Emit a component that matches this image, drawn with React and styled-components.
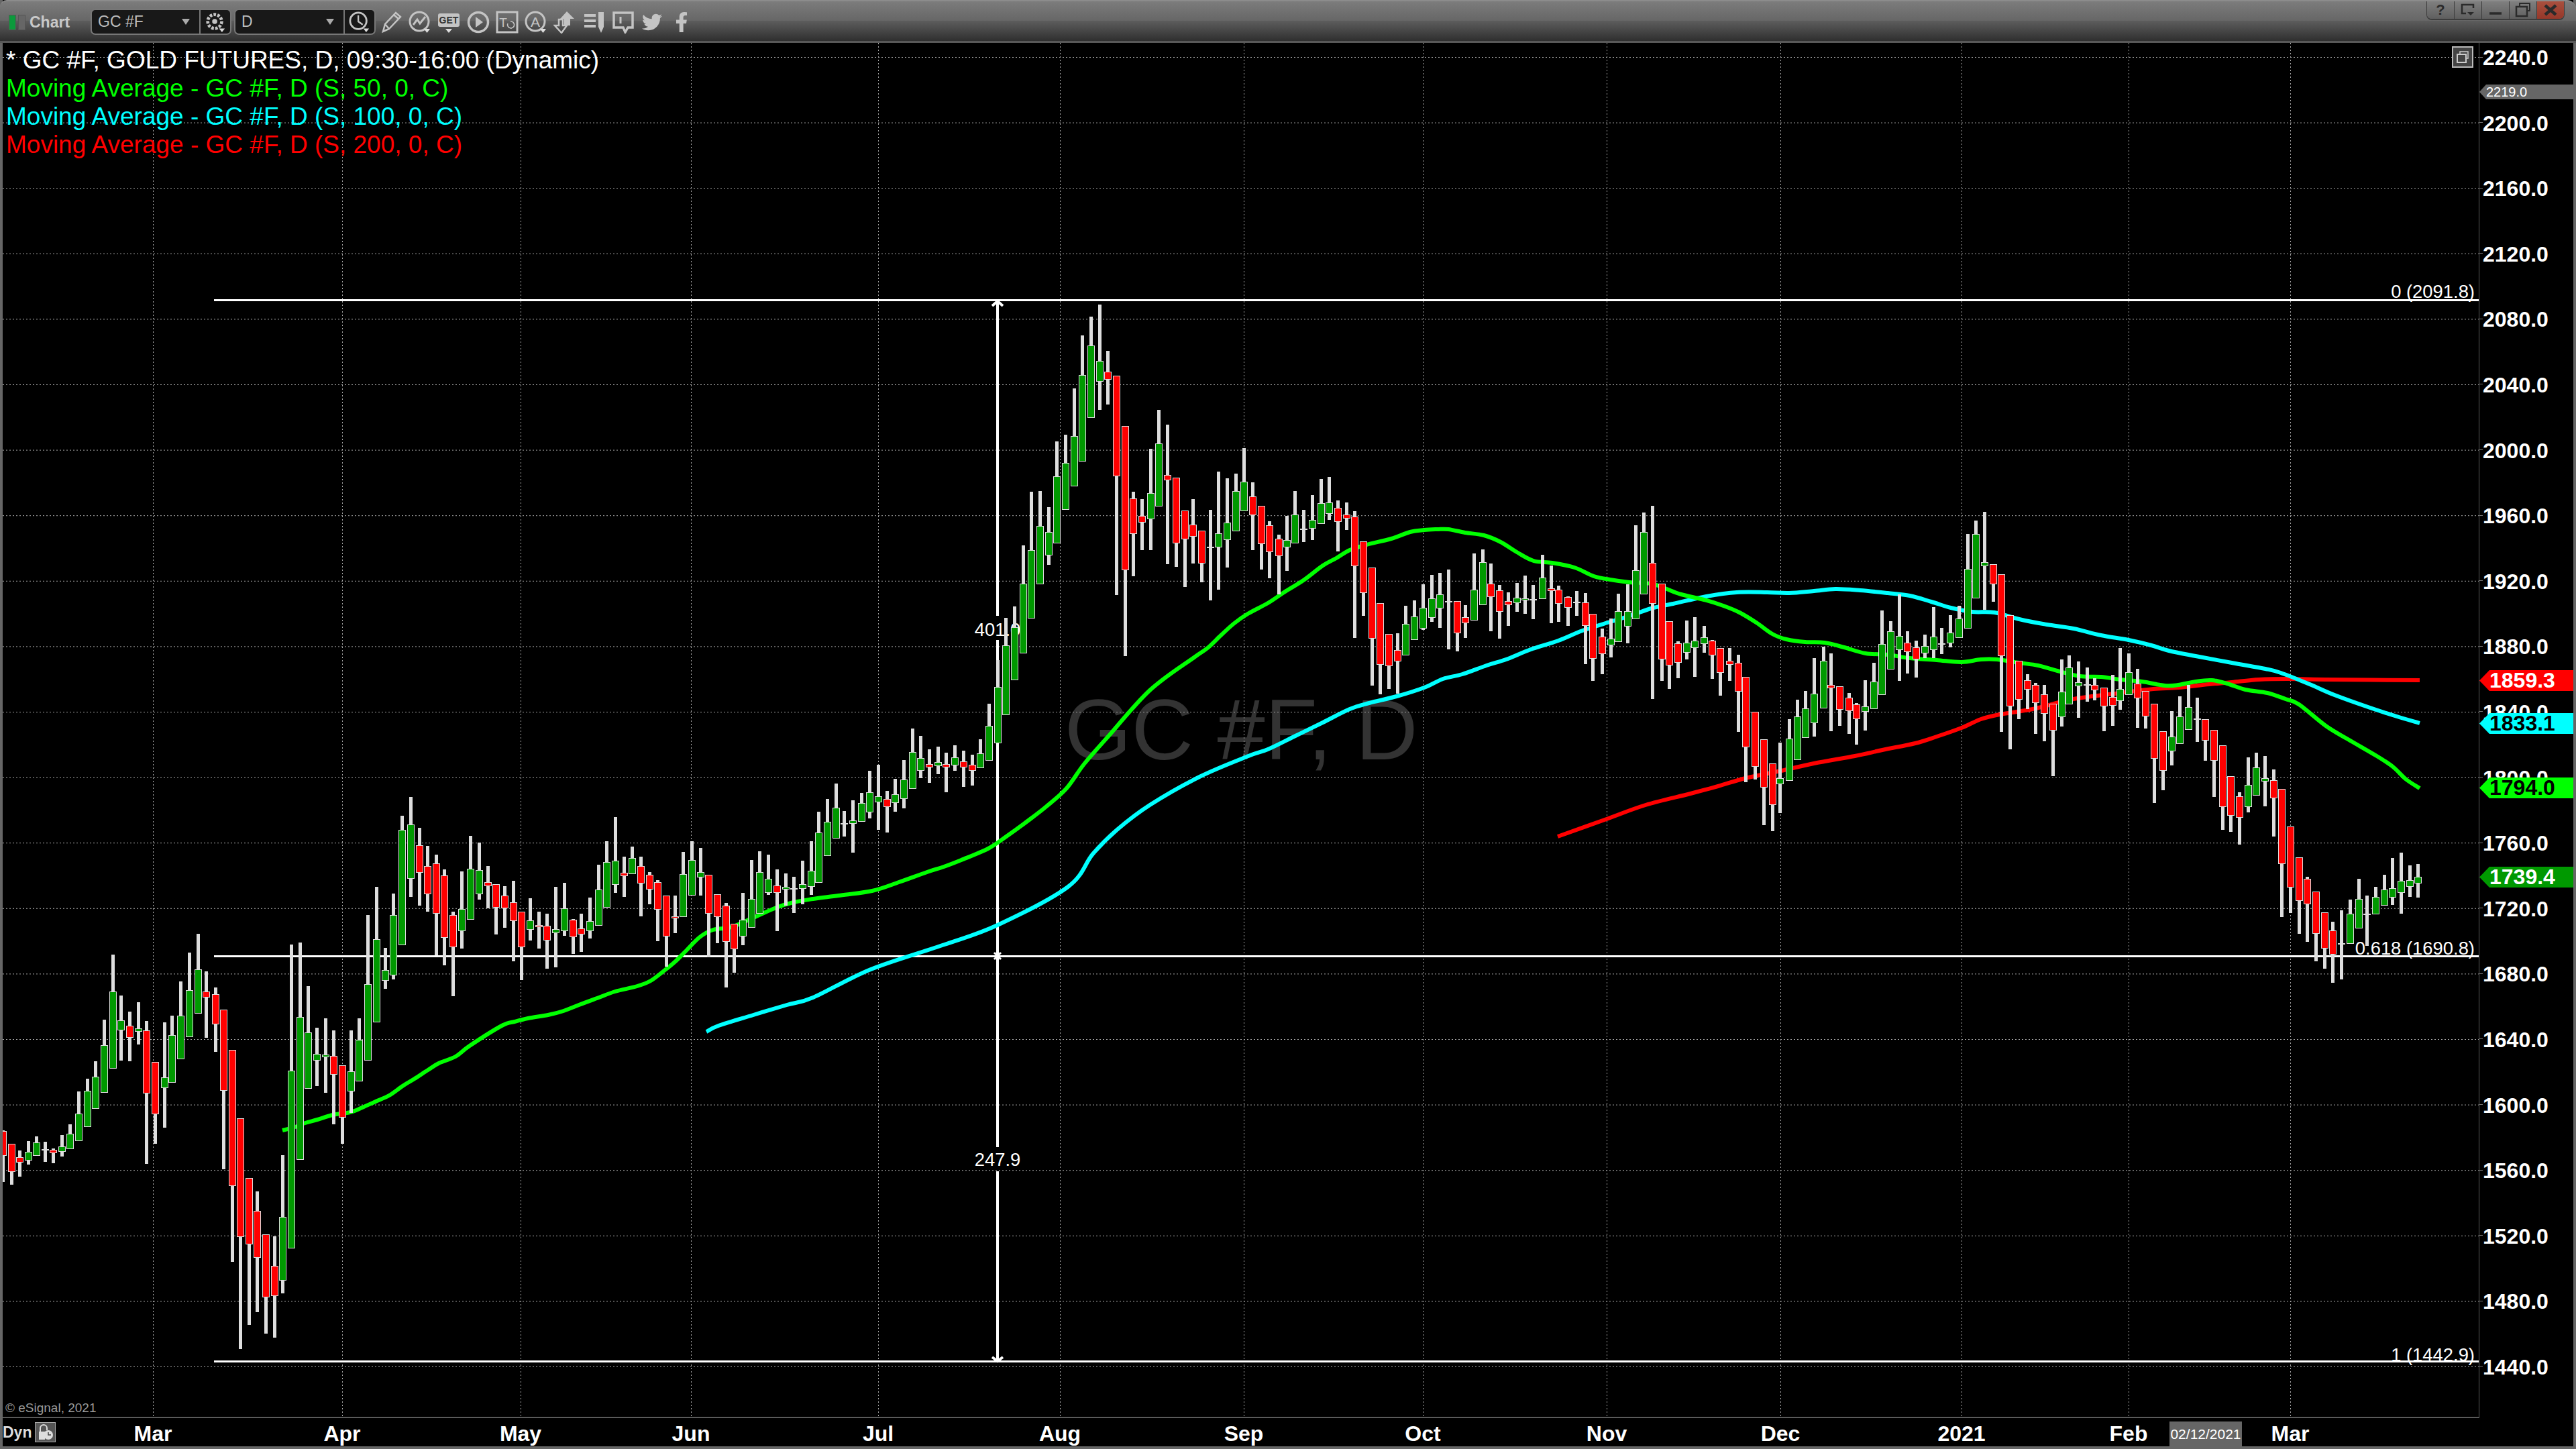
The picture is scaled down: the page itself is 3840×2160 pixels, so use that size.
import React from "react";
import styled, { createGlobalStyle } from "styled-components";
import { FaTwitter, FaFacebookF } from "react-icons/fa";

// candles traced from the chart: [x, wickTop, wickBottom, bodyTop, bodyBottom, colour]
// no body = doji (the open and close are the same)
const TRACES = [
  { ox: 0, oy: 1350, sx: 2.24, sy: 2.24, rows: [
    [10,750,922,754,834,"r"],[37,796,932,796,888,"r"],[64,818,905,842,857,"r"],[93,786,865,823,850,"g"],[122,771,834,792,834,"g"],
    [149,788,856,815],[178,810,860,816,825,"r"],[207,765,838,805,821,"g"],[234,730,812,763,812,"g"],[263,620,785,695,785,"g"],
    [292,578,738,619,738,"g"],[319,520,677,572,677,"g"],[348,381,624,467,624,"g"],[377,164,543,288,543,"g"],[404,300,517,384,415,"g"],
    [433,354,520,402,440,"r"],[462,323,464,412,420,"g"],[489,385,862,418,626,"r"],[518,523,795,523,695,"r"],[548,390,741,574,608,"g"],
    [574,367,590,433,590,"g"],[603,253,512,368,512,"g"],[632,157,438,283,438,"g"],[661,94,359,214,359,"g"],[688,220,441,288,306,"r"],
    [718,273,488,297,395,"r"],[747,348,880,348,617,"r"],[774,483,1189,483,935,"r"],[803,711,1481,711,1105,"r"],[832,910,1400,910,1130,"r"],
    [859,954,1357,1020,1175,"r"],[888,1099,1429,1099,1307,"r"],[917,1104,1443,1204,1302,"r"],[944,833,1295,1041,1251,"g"],[973,130,1143,552,1143,"g"],
    [1002,123,848,373,848,"g"],[1029,269,610,425,610,"g"],[1058,408,603,496,516,"g"],[1087,376,625,498,505,"g"],[1114,417,730,503,563,"r"],
    [1143,534,795,534,707,"r"],[1172,417,693,555,619,"g"],[1199,376,586,449,586,"g"],[1228,31,516,263,516,"g"],[1257,-63,389,113,389,"g"],
    [1286,141,278,216,250,"g"],[1313,-40,246,32,232,"g"],[1342,-300,131,-253,131,"g"],[1370,-363,-30,-270,-90,"g"],[1400,-260,0,-200,-110,"r"],
    [1428,-200,20,-130,-40,"r"],[1457,-170,165,-140,25,"r"],[1484,-120,199,-100,107,"r"],[1513,20,302,32,138,"r"],
  ]},
  { ox: 690, oy: 1130, sx: 3, sy: 3, rows: [
    [-5,507,852,675,772,"g"],[32,348,721,496,721,"g"],[71,378,633,502,607,"g"],[110,483,672,556,572,"r"],[146,565,789,565,668,"r"],
    [185,573,759,616,671,"r"],[224,549,909,646,728,"r"],[260,688,993,688,845,"r"],[299,627,816,727,767,"g"],[338,687,852,748,755,"r"],
    [374,696,942,752,815,"r"],[413,576,936,766,782,"g"],[452,558,795,673,773,"g"],[491,720,876,724,800,"r"],[527,696,867,763,788,"r"],
    [566,624,807,730,773,"g"],[605,477,748,589,748,"g"],[641,372,668,466,668,"g"],[680,264,603,460,565,"g"],[719,441,621,514,527,"r"],
    [755,396,518,448,518,"g"],[794,441,708,485,559,"r"],[833,510,654,523,587,"r"],[869,546,819,556,677,"r"],[908,616,933,616,797,"r"],
    [947,615,783,709,716,"r"],[983,420,710,520,710,"g"],[1022,372,614,457,614,"g"],[1061,402,615,511,533,"g"],[1097,523,891,523,695,"r"],
    [1136,610,828,610,710,"r"],[1175,648,1026,661,821,"r"],[1211,742,960,742,853,"r"],[1250,603,837,724,797,"g"],[1289,456,758,631,758,"g"],
    [1325,417,695,511,695,"g"],[1364,432,612,541,602,"g"],[1403,498,774,572,602,"r"],[1442,516,660,577,587,"g"],[1478,531,693,585],
    [1517,459,654,565,584,"g"],[1556,372,612,505,575,"g"],
  ]},
  { ox: 1200, oy: 880, sx: 3, sy: 3, rows: [
    [61,990,1305,1084,1305,"g"],[100,933,1187,1036,1187,"g"],[139,864,1108,973,1108,"g"],[175,987,1101,1044],[214,939,1173,1030,1043,"g"],
    [253,906,1034,952,1034,"g"],[289,807,1020,904,992,"g"],[328,780,1071,922,947,"g"],[367,897,1083,934,968,"r"],[403,843,990,913,950,"g"],
    [442,759,975,847,932,"g"],[481,618,887,724,887,"g"],[517,651,840,751,806,"g"],[556,711,861,778,791,"r"],[595,699,822,769,785,"g"],
    [631,726,903,778,791,"r"],[670,693,807,748,782,"g"],[709,717,879,766,791,"r"],[748,735,873,781,806,"r"],[784,666,794,730,794,"g"],
    [823,507,761,607,761,"g"],[862,312,683,433,683,"g"],[898,123,557,247,557,"g"],[937,72,401,166,401,"g"],
  ]},
  { ox: 1400, oy: 420, sx: 3, sy: 2.8, rows: [
    [376,1100,1550,1261,1550,"g"],[412,876,1405,1121,1405,"g"],[451,874,1262,1020,1262,"g"],[490,941,1182,1045,1141,"g"],[526,666,1091,813,1091,"g"],
    [565,638,951,757,951,"g"],[604,445,853,645,853,"g"],[640,224,749,390,749,"g"],[679,146,567,267,567,"g"],[718,95,535,331,416,"g"],
    [754,288,512,376,408,"r"],[793,393,1308,393,811,"r"],[832,603,1562,603,1203,"r"],[868,876,1229,905,1052,"r"],[907,907,1120,978,1004,"r"],
    [946,697,1120,883,990,"g"],[982,535,937,676,937,"g"],[1021,596,1179,807,828,"r"],[1060,819,1190,819,1091,"r"],[1099,956,1274,956,1074,"r"],
    [1135,907,1176,1015,1063,"r"],[1174,1040,1254,1040,1175,"r"],[1213,952,1330,1108],[1249,792,1285,1051,1108,"g"],[1288,820,1193,1006,1077,"g"],
    [1327,801,1041,875,1041,"g"],[1363,694,957,835,957,"g"],[1402,837,1120,897,973,"r"],[1441,936,1201,936,1094,"r"],[1477,1000,1238,1017,1127,"r"],
  ]},
  { ox: 1890, oy: 700, sx: 2.45, sy: 3, rows: [
    [38,291,558,310,385,"r"],[69,207,453,316,346,"g"],[99,96,328,203,328,"g"],[131,180,324,266],[162,114,315,226,263,"g"],
    [193,42,241,151,241,"g"],[224,33,225,148,196,"g"],[256,138,366,172,232,"r"],[286,147,270,203,217,"r"],[317,186,753,211,430,"r"],
    [349,322,654,322,550,"r"],[380,439,966,439,755,"r"],[410,598,1005,598,871,"r"],[442,736,981,736,877,"r"],[474,732,1002,808,857,"r"],
    [503,609,829,691,829,"g"],[535,585,761,658,761,"g"],[567,513,717,619,710,"g"],[597,471,681,577,661,"g"],[628,462,708,559,619,"g"],
    [660,447,804,591],[690,589,813,589,730,"r"],[721,606,753,661,685,"r"],[753,375,673,538,673,"g"],[783,357,604,415,604,"g"],
    [814,420,723,512,569,"r"],[846,516,756,541,634,"r"],[876,549,699,589,604,"r"],[908,507,636,574,595,"g"],[939,474,645,577,583,"g"],
    [968,516,669,581],[1001,381,577,484,577,"g"],[1033,430,687,532,541,"r"],[1062,519,681,538,598,"r"],[1094,567,699,571,616,"r"],
    [1126,543,654,594],[1158,552,870,595,697,"r"],[1187,646,945,646,845,"r"],[1219,711,915,748,823,"r"],[1251,666,840,757,784,"g"],
    [1280,555,769,634,769,"g"],[1312,513,777,634,700,"g"],[1343,249,667,451,667,"g"],[1373,192,556,280,556,"g"],[1405,162,1026,418,598,"r"],
    [1437,511,945,511,847,"r"],[1466,679,981,679,874,"r"],[1498,768,933,778,862,"r"],[1530,675,849,775,817,"g"],[1559,660,927,766,796,"g"],
  ]},
  { ox: 2520, oy: 740, sx: 2.45, sy: 3, rows: [
    [48,579,699,631,658,"g"],[79,642,816,646,709,"r"],[109,679,891,679,788,"r"],[141,678,825,736,751,"r"],[173,708,1053,745,871,"r"],
    [202,808,1278,808,1120,"r"],[234,964,1266,964,1207,"r"],[266,1087,1470,1087,1300,"r"],[298,1195,1497,1195,1378,"r"],[327,1101,1416,1261,1285,"g"],
    [359,996,1270,1084,1270,"g"],[390,909,1177,985,1177,"g"],[420,870,1078,949,1078,"g"],[452,723,1074,883,1012,"g"],[484,672,946,736,946,"g"],
    [513,702,1050,844,856,"r"],[545,850,1026,850,952,"r"],[577,879,1062,901,958,"r"],[606,924,1110,931,994,"r"],[638,822,1047,940,961,"g"],
    [670,744,949,829,949,"g"],[699,510,886,661,886,"g"],[731,558,772,604,772,"g"],[763,438,825,625,685,"g"],[792,603,792,655,694,"r"],
    [824,645,810,676,727,"r"],[856,618,723,670,700,"g"],[886,495,723,628,685,"g"],[917,588,705,659],[949,531,675,610,655,"g"],
    [981,489,631,547,631,"g"],[1011,168,589,325,589,"g"],[1042,108,454,169,454,"g"],[1074,69,507,295,310,"g"],[1104,304,471,304,391,"r"],
    [1135,349,1053,349,712,"r"],[1167,532,1131,532,937,"r"],[1197,736,996,736,907,"r"],[1229,795,951,823,862,"r"],[1260,834,1062,844,922,"r"],
    [1290,843,1095,886,970,"r"],[1322,928,1251,928,1045,"r"],[1354,729,1029,874,985,"g"],[1383,711,928,766,928,"g"],[1415,738,990,832,847,"g"],
    [1447,765,918,843],[1476,813,912,844,865,"r"],[1508,856,1050,856,937,"r"],[1540,798,1026,898,934,"r"],[1568,678,954,862,913,"g"],
  ]},
  { ox: 3060, oy: 950, sx: 3, sy: 3, rows: [
    [340,72,257,157,257,"g"],[379,141,405,208,271,"r"],[415,241,408,241,352,"r"],[454,298,741,298,541,"r"],[493,421,684,421,596,"r"],
    [532,330,573,445,508,"g"],[568,264,475,355,475,"g"],[607,213,412,313,412,"g"],[646,270,468,366],[682,367,552,367,460,"r"],
    [721,415,714,415,550,"r"],[760,484,861,484,757,"r"],[796,622,870,622,796,"r"],[835,693,927,712,805,"r"],[874,537,783,661,757,"g"],
    [910,516,706,583,706,"g"],[949,531,756,631,643,"g"],[988,591,891,640,718,"r"],[1024,679,1251,679,1012,"r"],[1063,847,1233,847,1117,"r"],
    [1102,985,1326,985,1177,"r"],[1138,1071,1362,1081,1192,"r"],[1177,1138,1449,1138,1324,"r"],
  ]},
  { ox: 3400, oy: 950, sx: 3, sy: 3, rows: [
    [196,1232,1482,1232,1390,"r"],[232,1272,1545,1313,1418,"r"],[271,1221,1530,1370],[310,1173,1369,1238,1369,"g"],[349,1080,1300,1172,1300,"g"],
    [385,1155,1380,1239],[424,1116,1237,1163,1237,"g"],[463,1062,1198,1130,1198,"g"],[499,987,1197,1124,1162,"g"],[538,963,1236,1091,1141,"g"],
    [577,1020,1161,1088,1114,"g"],[613,1014,1164,1072,1099,"g"],
  ]},
];

const BARS = TRACES.flatMap(({ ox, oy, sx, sy, rows }) =>
  rows.map(([x, wt, wb, bt, bb, c]) => ({
    x: Math.round(ox + x / sx),
    wickTop: oy + wt / sy,
    wickBottom: oy + wb / sy,
    bodyTop: oy + bt / sy,
    bodyBottom: bb === undefined ? null : oy + bb / sy,
    colour: c,
  }))
);

const MA50 = "421,1685 440,1680 455,1674 473,1669 496,1662 522,1658 540,1651 560,1642 580,1633 600,1619 618,1608 638,1595 654,1585 679,1575 700,1559 748,1529 767,1523 787,1518 817,1513 840,1507 863,1498 890,1488 917,1478 950,1470 970,1462 990,1447 1007,1433 1023,1417 1043,1397 1063,1386 1090,1382 1123,1368 1157,1353 1183,1345 1212,1340 1250,1335 1300,1328 1340,1315 1382,1300 1407,1292 1433,1282 1473,1265 1500,1247 1533,1223 1560,1202 1590,1175 1616,1139 1650,1100 1714,1029 1780,980 1800,966 1820,947 1840,929 1860,915 1890,899 1914,883 1943,865 1972,843 1992,832 2012,820 2037,812 2074,803 2102,793 2123,790 2143,789 2159,789 2184,794 2212,798 2237,808 2261,823 2286,836 2314,839 2347,846 2376,859 2400,864 2429,868 2461,870 2482,877 2506,886 2540,894 2569,903 2593,913 2618,928 2642,945 2663,953 2691,957 2720,958 2749,965 2781,974 2814,976 2847,981 2887,984 2924,987 2953,983 2977,983 3010,988 3038,992 3067,1000 3100,1008 3132,1009 3160,1013 3193,1016 3227,1022 3247,1021 3273,1016 3297,1014 3320,1019 3347,1028 3380,1033 3407,1042 3427,1050 3467,1082 3500,1102 3543,1127 3567,1143 3587,1162 3607,1175";
const MA100 = "1053,1538 1071,1529 1123,1513 1173,1498 1212,1487 1298,1445 1408,1408 1487,1379 1592,1322 1629,1273 1665,1237 1714,1200 1788,1158 1861,1127 1890,1117 1931,1097 1972,1077 2012,1057 2041,1048 2082,1038 2123,1025 2151,1012 2180,1005 2216,992 2245,983 2282,968 2323,955 2359,940 2400,927 2433,917 2461,907 2494,900 2544,889 2589,883 2634,883 2667,884 2704,881 2736,878 2773,880 2814,884 2847,888 2879,897 2908,906 2940,912 2973,913 3010,923 3051,931 3091,937 3132,947 3173,954 3207,962 3233,970 3273,978 3327,988 3377,997 3400,1003 3443,1020 3480,1036 3533,1055 3573,1068 3607,1078";
const MA200 = "2322,1247 2392,1222 2453,1200 2520,1183 2561,1172 2602,1160 2655,1149 2704,1138 2765,1127 2806,1118 2855,1108 2887,1098 2924,1085 2953,1072 2981,1065 3030,1057 3091,1042 3160,1033 3210,1027 3247,1025 3293,1020 3327,1017 3367,1013 3410,1012 3467,1013 3607,1014";

// moving averages are traced at spaced points, round them off between the points
const smoothPath = (points) => {
  const p = points.split(" ").map((s) => s.split(",").map(Number));
  let d = `M${p[0][0]} ${p[0][1]}`;
  for (let i = 0; i < p.length - 1; i++) {
    const a = p[i - 1] || p[i];
    const b = p[i];
    const c = p[i + 1];
    const e = p[i + 2] || c;
    const c1 = [b[0] + (c[0] - a[0]) / 6, b[1] + (c[1] - a[1]) / 6];
    const c2 = [c[0] - (e[0] - b[0]) / 6, c[1] - (e[1] - b[1]) / 6];
    d += ` C${c1[0].toFixed(1)} ${c1[1].toFixed(1)} ${c2[0].toFixed(1)} ${c2[1].toFixed(1)} ${c[0]} ${c[1]}`;
  }
  return d;
};

const PRICES = Array.from({ length: 21 }, (_, i) => (2240 - i * 40).toFixed(1));
const MONTHS = [
  ["Mar", 228], ["Apr", 510], ["May", 776], ["Jun", 1030], ["Jul", 1309], ["Aug", 1580], ["Sep", 1854],
  ["Oct", 2121], ["Nov", 2395], ["Dec", 2654], ["2021", 2924], ["Feb", 3173], ["Mar", 3414],
];
const TAGS = [
  { label: "1859.3", top: 935, bg: "#ff0000", fg: "#fff" },
  { label: "1833.1", top: 999, bg: "#00ffff", fg: "#000" },
  { label: "1794.0", top: 1095, bg: "#00ff00", fg: "#000" },
  { label: "1739.4", top: 1228, bg: "#009900", fg: "#fff" },
];

const GlobalStyle = createGlobalStyle`
  html, body {
    margin: 0;
    background: #000;
    overflow: hidden;
  }
  body, svg text {
    font-family: "Liberation Sans", Arial, sans-serif;
  }
`;

const Window = styled.div`
  width: 3840px;
  height: 2160px;
  box-sizing: border-box;
  display: flex;
  flex-direction: column;
  border: solid #666;
  border-width: 0 4px 4px 4px;
  background: #000;
`;

const TitleBar = styled.div`
  height: 64px;
  flex: none;
  margin: 0 -4px;
  display: flex;
  align-items: flex-start;
  box-sizing: border-box;
  padding-left: 13px;
  border-top: 2px solid #8c8c8c;
  border-bottom: 3px solid #585858;
  border-radius: 10px 14px 0 0;
  background: linear-gradient(#7c7c7c 0, #666 50%, #5c5c5c 50%, #2f2f2f 100%);
`;

const ChartGlyph = styled.div`
  display: flex;
  gap: 3px;
  margin-top: 20px;
  span {
    display: block;
    width: 9px;
    height: 21px;
    border: 1px solid #555;
    background: #666;
  }
  span:first-child {
    background: #0c9a3c;
  }
`;

const ChartTitle = styled.div`
  margin: 17px 31px 0 6px;
  font-size: 23px;
  line-height: 28px;
  font-weight: 700;
  color: #c8c8c8;
`;

const Combo = styled.div`
  width: ${(p) => p.$w}px;
  height: 39px;
  margin: 11px 4px 0 0;
  box-sizing: border-box;
  display: flex;
  border: 2px solid #777;
  border-radius: 7px;
  background: #181818;
`;

const ComboValue = styled.div`
  flex: 1;
  display: flex;
  align-items: center;
  justify-content: space-between;
  padding: 0 14px 0 9px;
  font-size: 23px;
  color: #bdbdbd;
  &::after {
    content: "";
    border: 6px solid transparent;
    border-top: 9px solid #aaa;
    border-bottom: 0;
  }
`;

const ComboIcon = styled.div`
  width: 44px;
  display: flex;
  align-items: center;
  justify-content: center;
  border-left: 2px solid #777;
`;

const ToolIcons = styled.div`
  display: flex;
  margin-top: 13px;
  margin-left: -3px;
`;

const Tool = styled.div`
  width: 43.3px;
  height: 36px;
  display: flex;
  align-items: center;
  justify-content: center;
  color: #c4c4c4;
  font-size: 30px;
`;

const WindowButtons = styled.div`
  margin-left: auto;
  margin-right: 17px;
  display: flex;
  height: 26px;
  border: solid #3c3c3c;
  border-width: 0 1px 2px 1px;
  border-radius: 0 0 8px 8px;
  overflow: hidden;
`;

const WindowButton = styled.div`
  width: 40px;
  display: flex;
  align-items: center;
  justify-content: center;
  font-size: 22px;
  font-weight: 700;
  color: #2a2a2a;
  border-left: 1px solid #3c3c3c;
  background: ${(p) => (p.$danger ? "linear-gradient(#a9503e, #96382a)" : "linear-gradient(#7f7f7f, #5f5f5f)")};
  &:first-child {
    border-left: 0;
  }
`;

const Main = styled.div`
  flex: 1;
  min-height: 0;
  display: flex;
`;

const Plot = styled.div`
  position: relative;
  width: 3692px;
  flex: none;
  box-sizing: border-box;
  border: solid #5a5a5a;
  border-width: 0 1px 2px 0;
  overflow: hidden;
`;

const Legend = styled.div`
  position: absolute;
  top: 5px;
  left: 5px;
  font-size: 37px;
  line-height: 42px;
  white-space: nowrap;
`;

const LegendLine = styled.div`
  color: ${(p) => p.$color};
`;

const Copyright = styled.div`
  position: absolute;
  left: 4px;
  bottom: 2px;
  font-size: 19px;
  line-height: 22px;
  color: #999;
`;

const PopOut = styled.div`
  position: absolute;
  top: 5px;
  right: 8px;
  width: 32px;
  height: 32px;
  box-sizing: border-box;
  display: flex;
  align-items: center;
  justify-content: center;
  border: 2px solid #bbb;
  background: #444;
`;

const PriceAxis = styled.div`
  position: relative;
  flex: 1;
  overflow: hidden;
`;

const PriceList = styled.div`
  margin-top: -26.3px;
`;

const PriceRow = styled.div`
  height: 97.6px;
  display: flex;
  align-items: center;
  font-size: 32px;
  font-weight: 700;
  color: #fff;
  &::before {
    content: "";
    width: 5px;
    height: 1px;
    margin-top: -3px;
    background: #777;
  }
`;

const PriceTag = styled.div`
  position: absolute;
  left: 0;
  right: 0;
  top: ${(p) => p.$top}px;
  height: ${(p) => p.$h || 31}px;
  display: flex;
  align-items: center;
  padding-left: ${(p) => p.$pad || 15}px;
  font-size: ${(p) => p.$size || 32}px;
  font-weight: ${(p) => (p.$plain ? 400 : 700)};
  background: ${(p) => p.$bg};
  color: ${(p) => p.$fg};
  clip-path: polygon(${(p) => p.$pad || 15}px 0, 100% 0, 100% 100%, ${(p) => p.$pad || 15}px 100%, 0 50%);
`;

const TimeAxis = styled.div`
  position: relative;
  height: 42px;
  flex: none;
  color: #fff;
`;

const DynBadge = styled.div`
  position: absolute;
  left: 0;
  top: 6px;
  display: flex;
  align-items: center;
  gap: 5px;
  font-size: 23px;
  font-weight: 700;
  color: #ddd;
`;

const DynIcon = styled.div`
  width: 31px;
  height: 30px;
  box-sizing: border-box;
  border: 1px solid #aaa;
  background: #555;
  display: flex;
  align-items: center;
  justify-content: center;
`;

const MonthLabel = styled.div`
  position: absolute;
  top: 5px;
  transform: translateX(-50%);
  font-size: 32px;
  line-height: 36px;
  font-weight: 700;
`;

const DateTag = styled.div`
  position: absolute;
  left: 3230px;
  top: 5px;
  bottom: 0;
  width: 108px;
  display: flex;
  align-items: center;
  justify-content: center;
  background: #666;
  font-size: 21px;
`;

const Candle = ({ bar }) => {
  const { x, wickTop, wickBottom, bodyTop, bodyBottom, colour } = bar;
  return (
    <g>
      <rect x={x - 2.5} y={wickTop} width="5" height={wickBottom - wickTop} fill="#dedede" />
      {bodyBottom === null ? (
        <rect x={x - 5.5} y={bodyTop - 1} width="11" height="2" fill="#dedede" />
      ) : (
        <rect
          x={x - 5}
          y={bodyTop}
          width="10"
          height={bodyBottom - bodyTop}
          fill={colour === "g" ? "#009900" : "#ff0000"}
          stroke="#dedede"
          strokeWidth="1"
        />
      )}
    </g>
  );
};

const Chart = () => (
  <svg width="3691" height="2048" viewBox="4 64 3691 2048" style={{ display: "block" }}>
    <text x="1587" y="1132" fontSize="128" fill="#333">GC #F, D</text>
    {PRICES.map((p, i) => (
      <line key={p} x1="4" x2="3695" y1={85.5 + i * 97.6} y2={85.5 + i * 97.6} stroke="#a8a8a8" strokeDasharray="2 3" />
    ))}
    {MONTHS.map(([m, x]) => (
      <line key={x} x1={x + 0.5} x2={x + 0.5} y1="64" y2="2112" stroke="#a8a8a8" strokeDasharray="2 3" />
    ))}

    <g fill="#fff" shapeRendering="crispEdges">
      <rect x="319" y="446" width="3376" height="3" />
      <rect x="319" y="1424" width="3376" height="3" />
      <rect x="319" y="2028" width="3376" height="3" />
      <rect x="1485" y="448" width="4" height="470" />
      <rect x="1485" y="954" width="4" height="756" />
      <rect x="1485" y="1746" width="4" height="284" />
    </g>
    <g stroke="#fff" strokeWidth="4" fill="none">
      <path d="M1479 456 L1487 449 L1495 456" />
      <path d="M1479 2023 L1487 2029 L1495 2023" />
      <path d="M1482 1420 L1492 1430 M1492 1420 L1482 1430" strokeWidth="3" />
    </g>
    <g fill="#fff" fontSize="27.4">
      <text x="1487" y="948" textAnchor="middle">401.0</text>
      <text x="1487" y="1738" textAnchor="middle">247.9</text>
      <text x="3689" y="444" textAnchor="end">0 (2091.8)</text>
      <text x="3689" y="1423" textAnchor="end">0.618 (1690.8)</text>
      <text x="3689" y="2029" textAnchor="end">1 (1442.9)</text>
    </g>

    <g fill="none" strokeWidth="6" strokeLinejoin="round">
      <path d={smoothPath(MA200)} stroke="#ff0000" />
      <path d={smoothPath(MA100)} stroke="#00ffff" />
      <path d={smoothPath(MA50)} stroke="#00ff00" />
    </g>

    <g shapeRendering="crispEdges">
      {BARS.map((bar, i) => (
        <Candle key={i} bar={bar} />
      ))}
    </g>
  </svg>
);

const line = { fill: "none", stroke: "#c4c4c4", strokeWidth: 2.5 };

const Icon = ({ children, size = 34 }) => (
  <svg width={size} height={size} viewBox="0 0 34 34">{children}</svg>
);

const Caret = () => <path d="M23 27 h9 l-4.5 6 z" fill="#ddd" />;

const App = () => (
  <>
    <GlobalStyle />
    <Window>
      <TitleBar>
        <ChartGlyph><span /><span /></ChartGlyph>
        <ChartTitle>Chart</ChartTitle>

        <Combo $w={210}>
          <ComboValue>GC #F</ComboValue>
          <ComboIcon>
            <Icon size={32}>
              <circle cx="16" cy="16" r="11" fill="none" stroke="#c4c4c4" strokeWidth="5" strokeDasharray="4 2.2" />
              <circle cx="16" cy="16" r="4" fill="#c4c4c4" />
              <Caret />
            </Icon>
          </ComboIcon>
        </Combo>
        <Combo $w={211}>
          <ComboValue>D</ComboValue>
          <ComboIcon>
            <Icon size={32}>
              <circle cx="15" cy="15" r="13" {...line} strokeWidth="3" />
              <path d="M15 6 V16 L22 21" {...line} />
              <Caret />
            </Icon>
          </ComboIcon>
        </Combo>

        <ToolIcons>
          <Tool>
            <Icon>
              <path d="M5 31 L8 20 L24 3 L31 9 L14 27 Z M8 20 L14 27 M21 6 L28 12" {...line} />
            </Icon>
          </Tool>
          <Tool>
            <Icon>
              <circle cx="16" cy="16" r="14" {...line} strokeWidth="3" />
              <path d="M7 21 L13 13 L17 19 L25 9" {...line} strokeWidth="3" />
              <Caret />
            </Icon>
          </Tool>
          <Tool>
            <Icon>
              <rect x="1" y="4" width="32" height="20" rx="3" fill="#c4c4c4" />
              <text x="17" y="19" textAnchor="middle" fontSize="14" fontWeight="700" fill="#333">GET</text>
              <path d="M12 27 h10 l-5 6 z" fill="#ddd" />
            </Icon>
          </Tool>
          <Tool>
            <Icon>
              <circle cx="17" cy="17" r="14.5" {...line} strokeWidth="3.5" />
              <path d="M13 9 L24 17 L13 25 Z" fill="#c4c4c4" />
            </Icon>
          </Tool>
          <Tool>
            <Icon>
              <rect x="2" y="2" width="30" height="30" {...line} strokeWidth="3" />
              <text x="11" y="24" textAnchor="middle" fontSize="19" fill="#c4c4c4">T</text>
              <path d="M18 19 a5 5 0 1 0 4 -3" {...line} strokeWidth="1.6" />
            </Icon>
          </Tool>
          <Tool>
            <Icon>
              <circle cx="16" cy="16" r="14" {...line} strokeWidth="3" />
              <text x="16" y="24" textAnchor="middle" fontSize="21" fill="#c4c4c4">A</text>
              <Caret />
            </Icon>
          </Tool>
          <Tool>
            <Icon>
              <path d="M20 1 L31 12 H25 V22 H16 V12 H10 Z" fill="#c4c4c4" />
              <path d="M12 33 L2 22 H8 V13 H14 V22 H20 Z" {...line} />
            </Icon>
          </Tool>
          <Tool>
            <Icon>
              <path d="M2 7 H19 M2 15 H19 M2 23 H19" stroke="#c4c4c4" strokeWidth="4" />
              <path d="M23 2 H31 V24 L27 33 L23 24 Z" fill="#c4c4c4" />
            </Icon>
          </Tool>
          <Tool>
            <Icon>
              <path d="M3 3 H31 V25 H24 L20 32 L17 25 H3 Z" {...line} strokeWidth="3.5" />
              <path d="M13 9 V19" {...line} strokeWidth="3" />
            </Icon>
          </Tool>
          <Tool><FaTwitter /></Tool>
          <Tool><FaFacebookF /></Tool>
        </ToolIcons>

        <WindowButtons>
          <WindowButton>?</WindowButton>
          <WindowButton>
            <svg width="22" height="20" viewBox="0 0 22 20">
              <path d="M19 7 V2 H2 V15 H8" fill="none" stroke="#2a2a2a" strokeWidth="2.5" />
              <path d="M10 13 h10 l-5 5 z" fill="#2a2a2a" />
            </svg>
          </WindowButton>
          <WindowButton>
            <svg width="20" height="20" viewBox="0 0 20 20"><path d="M1 15 H19" stroke="#2a2a2a" strokeWidth="3.5" /></svg>
          </WindowButton>
          <WindowButton>
            <svg width="24" height="24" viewBox="0 0 24 24">
              <path d="M7 6 V2 H22 V13 H18" fill="none" stroke="#2a2a2a" strokeWidth="2" />
              <rect x="2" y="7" width="16" height="14" fill="none" stroke="#2a2a2a" strokeWidth="2.5" />
            </svg>
          </WindowButton>
          <WindowButton $danger>
            <svg width="22" height="20" viewBox="0 0 22 20"><path d="M3 3 L19 17 M19 3 L3 17" stroke="#2a2a2a" strokeWidth="4.5" /></svg>
          </WindowButton>
        </WindowButtons>
      </TitleBar>

      <Main>
        <Plot>
          <Chart />
          <Legend>
            <LegendLine $color="#fff">* GC #F, GOLD FUTURES, D, 09:30-16:00 (Dynamic)</LegendLine>
            <LegendLine $color="#00ff00">Moving Average - GC #F, D (S, 50, 0, C)</LegendLine>
            <LegendLine $color="#00ffff">Moving Average - GC #F, D (S, 100, 0, C)</LegendLine>
            <LegendLine $color="#ff0000">Moving Average - GC #F, D (S, 200, 0, C)</LegendLine>
          </Legend>
          <PopOut>
            <svg width="20" height="20" viewBox="0 0 20 20">
              <path d="M6 5 V2 H18 V12 H15" fill="none" stroke="#ccc" strokeWidth="1.5" />
              <rect x="2" y="6" width="13" height="12" fill="none" stroke="#ccc" strokeWidth="2" />
            </svg>
          </PopOut>
          <Copyright>© eSignal, 2021</Copyright>
        </Plot>
        <PriceAxis>
          <PriceList>
            {PRICES.map((p) => (
              <PriceRow key={p}>{p}</PriceRow>
            ))}
          </PriceList>
          <PriceTag $top={62} $h={22} $pad={10} $size={20} $plain $bg="#666" $fg="#fff">2219.0</PriceTag>
          {TAGS.map((t) => (
            <PriceTag key={t.label} $top={t.top} $bg={t.bg} $fg={t.fg}>{t.label}</PriceTag>
          ))}
        </PriceAxis>
      </Main>

      <TimeAxis>
        <DynBadge>
          Dyn
          <DynIcon>
            <svg width="24" height="26" viewBox="0 0 24 26">
              <path d="M4 12 V7 a5 5 0 0 1 10 0 V10" fill="none" stroke="#ddd" strokeWidth="2" />
              <rect x="2" y="12" width="9" height="12" fill="#ddd" />
              <circle cx="16" cy="17" r="7" fill="#ddd" />
              <path d="M16 13 V17 H20" fill="none" stroke="#444" strokeWidth="1.5" />
            </svg>
          </DynIcon>
        </DynBadge>
        {MONTHS.map(([m, x]) => (
          <MonthLabel key={x} style={{ left: x - 4 }}>{m}</MonthLabel>
        ))}
        <DateTag>02/12/2021</DateTag>
      </TimeAxis>
    </Window>
  </>
);

export default App;
